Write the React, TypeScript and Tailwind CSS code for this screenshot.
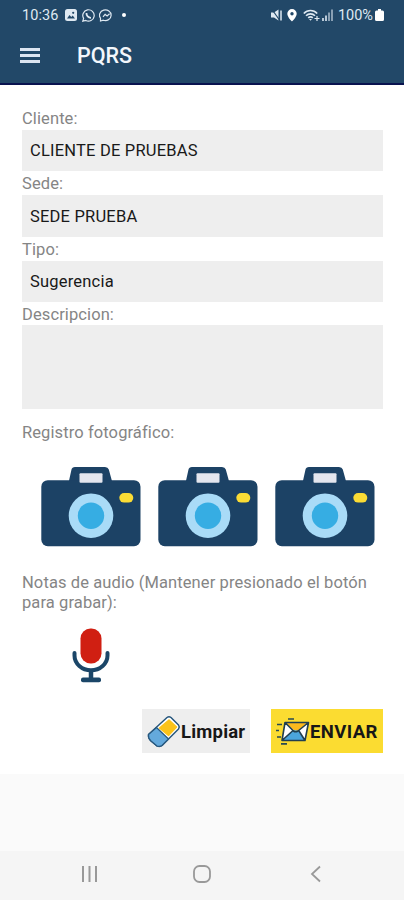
const fields = [
  { label: 'Cliente:', value: 'CLIENTE DE PRUEBAS', tracking: 'tracking-[0.2px]' },
  { label: 'Sede:', value: 'SEDE PRUEBA', tracking: 'tracking-[0.2px]' },
  { label: 'Tipo:', value: 'Sugerencia', tracking: 'tracking-[0.2px]' },
];

function StatusBar() {
  return (
    <div className="flex h-[30px] items-center pl-[22px] pr-[20px] text-[#dfe9f2]">
      <span className="w-[43px] pt-[2px] text-[14.5px] tracking-[0.1px]">10:36</span>
      <svg className="h-[12px] w-[12px]" viewBox="0 0 12 12">
        <rect width="12" height="12" rx="2.5" fill="currentColor" />
        <path d="M2 9.5 4.5 6l1.8 2 1.4-1.5L10 9.5z" fill="#224868" />
        <circle cx="8.2" cy="3.8" r="1.1" fill="#224868" />
      </svg>
      <svg className="ml-[5px] h-[13px] w-[13px]" viewBox="0 0 13 13" fill="none" stroke="currentColor">
        <path d="M.8 12.2 1.6 9.4A5.7 5.7 0 1 1 3.8 11.5z" strokeWidth="1.2" />
        <path d="M4.5 4C4.2 6.5 6.4 8.9 9 8.8" strokeWidth="1.8" />
      </svg>
      <svg className="ml-[4px] h-[13px] w-[14px]" viewBox="0 0 14 13" fill="none" stroke="currentColor" strokeWidth="1.2">
        <path d="M1.5 12V9.2A5.8 5.3 0 1 1 4.3 11.2z" />
        <path d="m4 7.8 2.1-2.5 2 1.7 2.5-2.2" />
      </svg>
      <span className="ml-[9px] h-[4px] w-[4px] rounded-full bg-white" />
      <svg className="ml-auto h-[12px] w-[12px]" viewBox="0 0 12 12">
        <path d="M0 3.5h3L7.5.5v11L3 8.5H0z" fill="currentColor" />
        <path d="M1 .5 8.5 11" stroke="#224868" strokeWidth="1.2" />
        <path d="M10 1.5v10" stroke="currentColor" strokeWidth="1.5" />
      </svg>
      <svg className="ml-[4px] h-[13px] w-[10px]" viewBox="0 0 10 13">
        <path d="M5 0a4.7 4.7 0 0 0-4.7 4.7C.3 8 5 12.5 5 12.5S9.7 8 9.7 4.7A4.7 4.7 0 0 0 5 0z" fill="#fff" />
        <circle cx="5" cy="4.7" r="1.7" fill="#224868" />
      </svg>
      <svg className="ml-[6px] h-[13px] w-[17px]" viewBox="0 0 17 13" fill="none" stroke="currentColor">
        <path d="M.8 4.5C4.5.5 10.5.5 14.2 4.5M3 6.7c2.5-2.5 6.5-2.5 9 0M5.2 8.9c1.4-1.3 3.2-1.3 4.6 0" strokeWidth="1.6" />
        <path d="M6 10h3l-1.5 1.8z" fill="currentColor" stroke="none" />
        <path d="M11.5 9.5h5M14 7v5" strokeWidth="1.2" />
      </svg>
      <svg className="ml-[2px] h-[12px] w-[11px]" viewBox="0 0 11 12" fill="currentColor">
        <path d="M0 9h2v3H0zM3 6.5h2V12H3z" opacity=".8" />
        <path d="M6 3.5h2V12H6zM9 .5h2V12H9z" opacity=".55" />
      </svg>
      <span className="ml-[5px] pt-[2px] text-[14.5px]">100%</span>
      <svg className="ml-[2px] h-[12px] w-[9px]" viewBox="0 0 9 12" fill="#fff">
        <path d="M3 0h3v1.5h1.5A1.5 1.5 0 0 1 9 3v7.5A1.5 1.5 0 0 1 7.5 12h-6A1.5 1.5 0 0 1 0 10.5V3a1.5 1.5 0 0 1 1.5-1.5H3z" />
      </svg>
    </div>
  );
}

function Camera() {
  return (
    <svg className="h-[80px] w-[100px]" viewBox="0 0 100 80">
      <path d="M27.5 16 30.5 2.5Q31 0 34 0H64Q67 0 67.8 2.5L71.5 16z" fill="#1c4265" />
      <rect x=".3" y="13.2" width="99.2" height="66" rx="6.5" fill="#1c4265" />
      <rect x="38.5" y="6.2" width="23" height="9.5" rx="1" fill="#e4e6ee" />
      <circle cx="50" cy="48.7" r="22.3" fill="#a9dbf7" />
      <circle cx="50" cy="48.7" r="13.2" fill="#36ade3" />
      <rect x="78.3" y="26" width="14" height="9.6" rx="4.8" fill="#fbdc35" />
    </svg>
  );
}

function Microphone() {
  return (
    <svg className="h-[56px] w-[38px]" viewBox="0 0 38 56" fill="none">
      <path d="M2.5 25v2.5a16.5 14.8 0 0 0 33 0V25" stroke="#1b4668" strokeWidth="4" strokeLinecap="round" />
      <path d="M19 42v9" stroke="#1b4668" strokeWidth="4.5" />
      <rect x="9" y="49.5" width="20" height="4.8" rx="2" fill="#1b4668" />
      <rect x="7" y="-1" width="24" height="39" rx="12" fill="#fff" />
      <rect x="8.5" y=".5" width="21" height="35" rx="10" fill="#d01f12" />
    </svg>
  );
}

function Eraser() {
  return (
    <svg className="h-[33px] w-[34px] shrink-0" viewBox="0 0 34 33" strokeLinejoin="round">
      <path d="M1.5 19.5 20 2.5Q22 1 24 2.5L31.5 10Q33 12 31.5 14L15 30.500Q13 32 10 31L4 26Q1 23 1.5 19.5z" fill="#fff" stroke="#27577d" strokeWidth="1.500" />
      <path d="M1.5 19.5 9.5 12.5 21.5 24 15 30.500Q13 32 10 31L4 26Q1 23 1.5 19.500z" fill="#64a9dc" stroke="#27577d" strokeWidth="1.200" />
      <path d="M12.500 13 22 5 29.500 12 21.500 20.500z" fill="#fbc31b" stroke="#fbc31b" strokeWidth="1.500" />
    </svg>
  );
}

function Envelope() {
  return (
    <svg className="h-[27px] w-[34px] shrink-0" viewBox="0 0 34 27" strokeLinejoin="round">
      <path d="M9 4.5H32.500L29 22.500H6z" fill="#fff" />
      <path d="M9 4.500H32.500L20 14z" fill="#fbb91d" />
      <path d="M6 22.500 16 13.500Q19.500 11 22.500 13.500L29 22.500z" fill="#4ba5dc" />
      <path d="M9 4.500H32.500L29 22.500H6zM9 4.500 17.500 13Q19.500 14.500 22 13L32.500 4.500M6 22.500 16.500 13M29 22.500 23 13" fill="none" stroke="#203f50" strokeWidth="1.600" />
      <path d="M12 1h6M1 6.500h5M0 12.500h3M1 19h4M5 25.800h6" stroke="#294a51" strokeWidth="1.700" />
    </svg>
  );
}

export default function App() {
  return (
    <div className="flex h-[900px] w-[404px] flex-col overflow-hidden bg-[#fafafa] font-['Roboto','Liberation_Sans',sans-serif]">
      <header className="h-[85px] shrink-0 border-b-2 border-[#09134f] bg-[#224868]">
        <StatusBar />
        <div className="flex h-[52px] items-center pl-[20px]">
          <button className="mb-[2px] flex w-[20px] flex-col gap-[3px]" aria-label="Menu">
            <span className="h-[3px] w-full bg-[#dce5f1]" />
            <span className="h-[3px] w-full bg-[#dce5f1]" />
            <span className="h-[3px] w-full bg-[#dce5f1]" />
          </button>
          <h1 className="ml-[37px] text-[21.5px] font-medium text-[#f3f7fc]">PQRS</h1>
        </div>
      </header>

      <main className="h-[689px] shrink-0 bg-white px-[22px] pt-[21px] text-[16.5px] tracking-[0.1px] text-[#858585]">
        {fields.map((field) => (
          <div key={field.label} className="h-[65.4px]">
            <label className="block h-[24px] leading-[25px]">{field.label}</label>
            <div className={`flex h-[41.4px] w-[361px] items-center bg-[#eeeeee] px-2 pt-[2px] text-[#191919] ${field.tracking}`}>
              {field.value}
            </div>
          </div>
        ))}
        <label className="block h-[23px] leading-[25px]">Descripcion:</label>
        <div className="h-[84px] w-[361px] bg-[#eeeeee]" />

        <p className="mt-[14px] leading-[20px]">Registro fotográfico:</p>
        <div className="mt-[24px] flex gap-[17px] pl-[19px]">
          <Camera />
          <Camera />
          <Camera />
        </div>

        <p className="mt-[26px] leading-[20px]">
          Notas de audio (Mantener presionado el botón
          <br />
          para grabar):
        </p>
        <div className="mt-[15px] pl-[50px]">
          <Microphone />
        </div>

        <div className="mt-[25px] flex w-[361px] justify-end gap-[21px] text-[18.5px] font-bold text-[#171717]">
          <button className="flex h-[44px] w-[108px] items-center bg-[#eeeeee] pl-[5px]">
            <Eraser />
            <span className="pt-[3px] tracking-[0.2px]">Limpiar</span>
          </button>
          <button className="flex h-[44px] w-[112px] items-center bg-[#fbdc31] pl-[5px]">
            <Envelope />
            <span className="pt-[3px] tracking-[0.4px]">ENVIAR</span>
          </button>
        </div>
      </main>

      <nav className="mt-auto flex h-[49px] items-center bg-[#f5f5f5] pb-[3px] text-[#999999]">
        <svg className="ml-[81px] h-[18px] w-[17px]" viewBox="0 0 17 18" stroke="currentColor" strokeWidth="2">
          <path d="M2 1v16M8.5 1v16M15 1v16" />
        </svg>
        <svg className="ml-[95px] h-[18px] w-[18px]" viewBox="0 0 18 18" fill="none" stroke="currentColor" strokeWidth="1.8">
          <rect x="1" y="1" width="16" height="16" rx="5.5" />
        </svg>
        <svg className="ml-[99px] h-[18px] w-[12px]" viewBox="0 0 12 18" fill="none" stroke="currentColor" strokeWidth="1.8">
          <path d="M10 1.5 2 9l8 7.5" />
        </svg>
      </nav>
    </div>
  );
}
